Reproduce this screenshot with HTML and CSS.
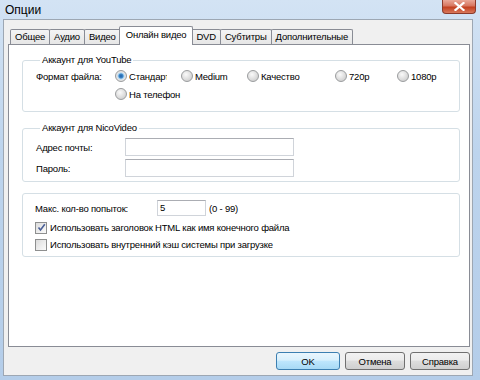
FILE: index.html
```html
<!DOCTYPE html>
<html lang="ru">
<head>
  <meta charset="UTF-8">
  <title>Опции</title>
  <link rel="stylesheet" href="styles.css">
</head>
<body>

  <div class="window">
    <div class="titlebar">
      <span class="title">Опции</span>
      <span class="close">
        <svg width="11" height="9" viewBox="0 0 11 9">
          <path d="M1.5 1 L9.5 8 M9.5 1 L1.5 8" stroke="#fff" stroke-width="2.2" stroke-linecap="square"/>
        </svg>
      </span>
    </div>

    <div class="client">
      <div class="tabs">
        <span class="tab">Общее</span>
        <span class="tab">Аудио</span>
        <span class="tab">Видео</span>
        <span class="tab active">Онлайн видео</span>
        <span class="tab">DVD</span>
        <span class="tab">Субтитры</span>
        <span class="tab">Дополнительные</span>
      </div>

      <div class="panel">
        <fieldset class="group">
          <legend>Аккаунт для YouTube</legend>
          <div class="format-grid">
            <span>Формат файла:</span>
            <span class="option"><span class="radio checked"></span><span class="clip">Стандарт</span></span>
            <span class="option"><span class="radio"></span>Medium</span>
            <span class="option"><span class="radio"></span>Качество</span>
            <span class="option"><span class="radio"></span>720p</span>
            <span class="option"><span class="radio"></span>1080p</span>
            <span></span>
            <span class="option"><span class="radio"></span>На телефон</span>
          </div>
        </fieldset>

        <fieldset class="group nico">
          <legend>Аккаунт для NicoVideo</legend>
          <div class="login-grid">
            <span>Адрес почты:</span>
            <span class="textbox"></span>
            <span>Пароль:</span>
            <span class="textbox"></span>
          </div>
        </fieldset>

        <fieldset class="group misc">
          <div class="tries">
            <span class="tries-label">Макс. кол-во попыток:</span>
            <span class="textbox small">5</span>
            <span class="range">(0 - 99)</span>
          </div>
          <div class="check-row"><span class="checkbox checked">
            <svg width="9" height="9" viewBox="0 0 9 9"><path d="M1.5 4.5 L3.5 7 L7.8 1.2" fill="none" stroke="#4a5f97" stroke-width="1.6"/></svg>
          </span>Использовать заголовок HTML как имя конечного файла</div>
          <div class="check-row"><span class="checkbox"></span>Использовать внутренний кэш системы при загрузке</div>
        </fieldset>
      </div>

      <div class="footer">
        <button class="btn default">OK</button>
        <button class="btn">Отмена</button>
        <button class="btn">Справка</button>
      </div>
    </div>
  </div>

</body>
</html>
```

FILE: styles.css
```css
body {
  margin: 0;
  width: 480px;
  height: 380px;
  overflow: hidden;
  font-family: "Liberation Sans", Arial, sans-serif;
  font-size: 9.5px;
  letter-spacing: -0.2px;
  color: #000;
}

.window {
  height: 380px;
  display: flex;
  flex-direction: column;
  background: linear-gradient(#d3e3f4, #bdd4ed 40%, #b4cde9);
}

.titlebar {
  height: 19px;
  display: flex;
  justify-content: space-between;
  align-items: flex-start;
}

.title {
  font-size: 12px;
  letter-spacing: 0;
  padding: 3px 0 0 5px;
}

.close {
  width: 32px;
  height: 13px;
  margin-right: 4px;
  border: 1px solid #8b3a2b;
  border-top: none;
  border-radius: 0 0 4px 4px;
  background: linear-gradient(#eaa898, #d77660 45%, #c3401f 55%, #d8785c);
  display: flex;
  align-items: center;
  justify-content: center;
}

.client {
  flex: 1;
  margin: 0 7px 4px 3px;
  padding: 7px 2px 0 4px;
  background: #f0f0f0;
  border: 1px solid #9da7b3;
}

/* tabs */
.tabs {
  height: 17px;
  display: flex;
  align-items: flex-end;
  padding-left: 2px;
}

.tab {
  height: 14px;
  line-height: 14px;
  padding: 0 4px;
  margin-right: -1px;
  border: 1px solid #898c95;
  border-bottom: none;
  border-radius: 2px 2px 0 0;
  background: linear-gradient(#f4f4f4, #e6e6e6);
}

.tab.active {
  height: 18px;
  line-height: 15px;
  margin: 0 -2px -1px -1px;
  padding: 0 6px;
  background: #fff;
  position: relative;
  z-index: 1;
}

.panel {
  height: 292px;
  padding: 9px 9px 0 13px;
  background: #fff;
  border: 1px solid #898c95;
}

/* group boxes */
.group {
  margin: 0;
  padding: 1px 0 8px 13px;
  border: 1px solid #d5dfe5;
  border-radius: 3px;
}

.group legend {
  margin-left: 4px;
  padding: 0 2px;
  line-height: 12px;
}

.format-grid {
  display: grid;
  grid-template-columns: 79px 66px 66px 88px 62px auto;
  grid-auto-rows: 18px;
  align-items: center;
}

.option {
  display: flex;
  align-items: center;
  gap: 2px;
  white-space: nowrap;
}

.clip {
  width: 38px;
  overflow: hidden;
}

.radio {
  width: 10px;
  height: 10px;
  border: 1px solid #9a9c9e;
  border-radius: 50%;
  background: radial-gradient(circle at 40% 35%, #fafafa, #d2d2d2 75%);
}

.radio.checked {
  background: radial-gradient(circle, #1f5fa8 0, #3d87c8 2px, #a9d3f2 3px, #e6e6e6 4px, #d2d2d2);
}

.nico {
  margin-top: 10px;
  padding: 4px 0 4px 13px;
}

.login-grid {
  display: grid;
  grid-template-columns: 89px 169px;
  grid-auto-rows: 18px;
  row-gap: 3px;
  align-items: center;
}

.textbox {
  height: 16px;
  background: #fff;
  border: 1px solid #d0d4da;
  border-top-color: #abadb3;
}

.misc {
  margin-top: 11px;
  padding: 6px 0 3px 12px;
}

.tries {
  display: flex;
  align-items: center;
  height: 16px;
  margin-bottom: 3px;
}

.tries-label {
  width: 122px;
}

.textbox.small {
  width: 45px;
  height: 14px;
  line-height: 14px;
  padding-left: 2px;
}

.range {
  margin-left: 3px;
}

.check-row {
  display: flex;
  align-items: center;
  gap: 3px;
  height: 17px;
}

.checkbox {
  width: 10px;
  height: 10px;
  border: 1px solid #8e8f8f;
  background: linear-gradient(135deg, #dcdcdc, #fbfbfb);
  display: flex;
  align-items: center;
  justify-content: center;
}

/* buttons */
.footer {
  display: flex;
  justify-content: flex-end;
  gap: 5px;
  padding-top: 5px;
}

.btn {
  width: 60px;
  height: 18px;
  padding: 0;
  font-family: inherit;
  font-size: 9.5px;
  letter-spacing: -0.2px;
  color: #000;
  border: 1px solid #707070;
  border-radius: 3px;
  background: linear-gradient(#f2f2f2, #ebebeb 45%, #dddddd 50%, #cfcfcf);
}

.btn.default {
  width: 64px;
  border-color: #3c7fb1;
  background: linear-gradient(#eaf6fd, #d9f0fc 45%, #bee6fd 50%, #a7d9f5);
}
```
